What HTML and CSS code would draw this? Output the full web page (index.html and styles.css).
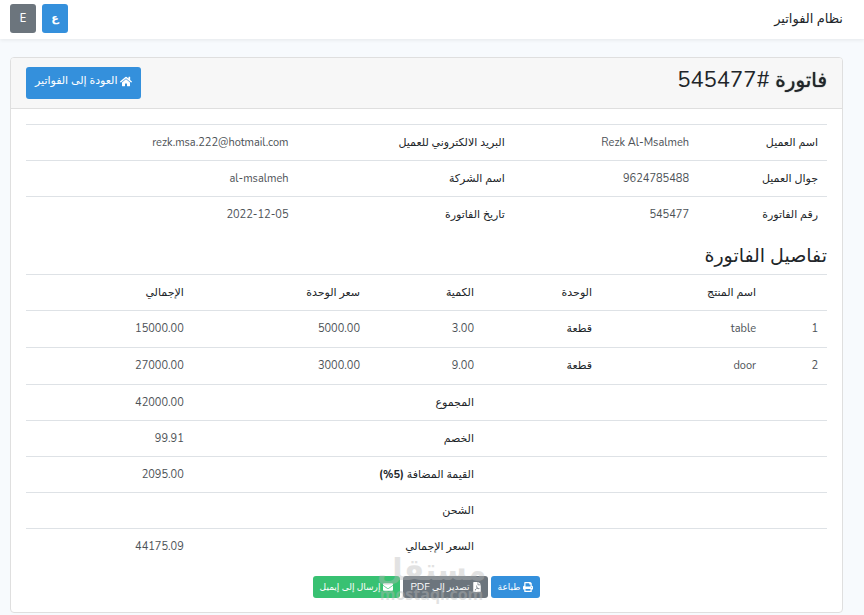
FILE: index.html
```html
<!DOCTYPE html>
<html lang="ar" dir="rtl">
<head>
<meta charset="utf-8">
<meta name="viewport" content="width=device-width, initial-scale=1">
<title>نظام الفواتير</title>
<link rel="stylesheet" href="styles.css">
</head>
<body>
<header class="navbar">
  <a class="brand" href="#">نظام الفواتير</a>
  <nav class="languages">
    <a class="btn btn-primary" href="#">ع</a>
    <a class="btn btn-secondary" href="#">E</a>
  </nav>
</header>
<main class="page">
  <section class="card">
    <div class="card-header">
      <h1><b>فاتورة</b> #545477</h1>
      <a class="btn btn-primary btn-back" href="#">
        <svg class="icon-home" viewBox="0 0 576 512" aria-hidden="true"><path d="M280 148 96 300v164a16 16 0 0 0 16 16h112a16 16 0 0 0 16-16v-96a16 16 0 0 1 16-16h64a16 16 0 0 1 16 16v96a16 16 0 0 0 16 16h112a16 16 0 0 0 16-16V300L296 148a12 12 0 0 0-16 0zM572 251l-84-69V44a12 12 0 0 0-12-12h-56a12 12 0 0 0-12 12v72l-89-74a48 48 0 0 0-61 0L4 251a12 12 0 0 0-2 17l26 31a12 12 0 0 0 17 2L280 107a12 12 0 0 1 16 0l235 194a12 12 0 0 0 17-2l26-31a12 12 0 0 0-2-17z"/></svg>
        العودة إلى الفواتير
      </a>
    </div>
    <div class="card-body">
      <table class="table customer">
        <colgroup><col class="c-label"><col class="c-value"><col class="c-label2"><col></colgroup>
        <tbody>
          <tr><th scope="row">اسم العميل</th><td>Rezk Al-Msalmeh</td><th scope="row">البريد الالكتروني للعميل</th><td>rezk.msa.222@hotmail.com</td></tr>
          <tr><th scope="row">جوال العميل</th><td>9624785488</td><th scope="row">اسم الشركة</th><td>al-msalmeh</td></tr>
          <tr><th scope="row">رقم الفاتورة</th><td>545477</td><th scope="row">تاريخ الفاتورة</th><td><bdi dir="ltr">2022-12-05</bdi></td></tr>
        </tbody>
      </table>
      <h2>تفاصيل الفاتورة</h2>
      <table class="table details">
        <colgroup><col class="c-index"><col class="c-product"><col class="c-unit"><col class="c-quantity"><col class="c-price"><col></colgroup>
        <thead>
          <tr><td></td><th scope="col">اسم المنتج</th><th scope="col">الوحدة</th><th scope="col">الكمية</th><th scope="col">سعر الوحدة</th><th scope="col">الإجمالي</th></tr>
        </thead>
        <tbody class="items">
          <tr><td>1</td><td>table</td><td class="unit">قطعة</td><td>3.00</td><td>5000.00</td><td>15000.00</td></tr>
          <tr><td>2</td><td>door</td><td class="unit">قطعة</td><td>9.00</td><td>3000.00</td><td>27000.00</td></tr>
        </tbody>
        <tfoot>
          <tr><td colspan="3"></td><th colspan="2" scope="row">المجموع</th><td>42000.00</td></tr>
          <tr><td colspan="3"></td><th colspan="2" scope="row">الخصم</th><td>99.91</td></tr>
          <tr><td colspan="3"></td><th colspan="2" scope="row">القيمة المضافة <b>(<bdi dir="ltr">%5</bdi>)</b></th><td>2095.00</td></tr>
          <tr><td colspan="3"></td><th colspan="2" scope="row">الشحن</th><td></td></tr>
          <tr><td colspan="3"></td><th colspan="2" scope="row">السعر الإجمالي</th><td>44175.09</td></tr>
        </tfoot>
      </table>
      <div class="actions">
        <a class="btn btn-sm btn-primary" href="#">
          <svg class="icon" viewBox="0 0 512 512" aria-hidden="true"><path fill-rule="evenodd" d="M448 192V77a32 32 0 0 0-9-22L393 9a32 32 0 0 0-22-9H96a32 32 0 0 0-32 32v160a64 64 0 0 0-64 64v112a16 16 0 0 0 16 16h48v96a32 32 0 0 0 32 32h320a32 32 0 0 0 32-32v-96h48a16 16 0 0 0 16-16V256a64 64 0 0 0-64-64zM384 448H128v-96h256zM384 224H128V64h192v48a16 16 0 0 0 16 16h48zM432 248a24 24 0 1 1 0 48 24 24 0 0 1 0-48z"/></svg>
          طباعة
        </a>
        <a class="btn btn-sm btn-secondary" href="#">
          <svg class="icon-file" viewBox="0 0 384 512" aria-hidden="true"><path fill-rule="evenodd" d="M224 136V0H24A24 24 0 0 0 0 24v464a24 24 0 0 0 24 24h336a24 24 0 0 0 24-24V160H248a24 24 0 0 1-24-24zM384 122v6H256V0h6a24 24 0 0 1 17 7l98 98a24 24 0 0 1 7 17zM158 180h38l2 80 50 66 62-2 10 36-46 6-48-24-70 20-44 72-36-14 12-34 46-32 36-74zm24 120-22 44 46-14z"/></svg>
          <span>تصدير إلى <span class="latin">PDF</span></span>
        </a>
        <a class="btn btn-sm btn-success" href="#">
          <svg class="icon" viewBox="0 0 512 512" aria-hidden="true"><path d="M502 191a6 6 0 0 1 10 5v204a48 48 0 0 1-48 48H48a48 48 0 0 1-48-48V196a6 6 0 0 1 10-5c22 17 52 39 155 114 21 15 57 48 91 47 34 1 71-32 91-47 103-75 133-97 155-114zM256 320c23 0 57-30 74-42 133-96 143-105 173-128a24 24 0 0 0 9-19v-19a48 48 0 0 0-48-48H48a48 48 0 0 0-48 48v19a24 24 0 0 0 9 19c31 23 40 32 173 128 17 12 51 42 74 42z"/></svg>
          إرسال إلى إيميل
        </a>
        <div class="watermark"><span class="mark-ar">مستقل</span><span class="mark-en" dir="ltr">mostaql.com</span></div>
      </div>
    </div>
  </section>
</main>
</body>
</html>
```
FILE: styles.css
```css
* { box-sizing: border-box; }

body {
  margin: 0;
  background: #f7fafd;
  color: #212529;
  font-family: Nunito, "DejaVu Sans", sans-serif;
  font-size: 11px;
  line-height: 18px;
}

a { color: inherit; text-decoration: none; }

.navbar {
  display: flex;
  align-items: center;
  justify-content: space-between;
  height: 39px;
  padding: 0 21px 2px 10px;
  background: #fff;
  box-shadow: 0 1px 4px rgba(0, 0, 0, 0.08);
}

.brand { font-size: 13px; }

.languages { display: flex; gap: 6px; }

.btn {
  display: inline-flex;
  align-items: center;
  justify-content: center;
  gap: 3px;
  padding: 5px 10px;
  border-radius: 3px;
  color: #fff;
  white-space: nowrap;
}

.languages .btn { height: 29px; width: 26px; padding: 5px 0; font-weight: 600; }
.btn-primary { background: #3490dc; }
.btn-secondary { background: #6c757d; }
.btn-success { background: #38c172; }

.btn svg { fill: currentColor; flex: none; }
.icon { width: 10px; height: 10px; }
.icon-file { width: 8px; height: 10px; }
.icon-home { width: 12px; height: 11px; }

.page { padding: 18px 21px 0 10px; }

.card {
  border: 1px solid #dfdfdf;
  border-radius: 4px;
  background: #fff;
}

.card-header {
  display: flex;
  align-items: flex-start;
  justify-content: space-between;
  height: 51px;
  padding: 9px 15px;
  border-bottom: 1px solid #dfdfdf;
  border-radius: 3px 3px 0 0;
  background: #f7f7f7;
}

.btn-back { height: 32px; padding: 4px 9px 8px; }

h1, h2 { margin: 0; font-weight: 400; }

h1 { font-size: 22px; line-height: 26px; }

h1 b {
  font-size: 20px;
  font-weight: 400;
  text-shadow: 0 0 1px #212529;
}

h2 { padding: 12px 0 6px; font-size: 19px; line-height: 24px; }

.card-body { padding: 15px 15px 14px; }

.table {
  width: 100%;
  table-layout: fixed;
  border-collapse: separate;
  border-spacing: 0;
}

.table th,
.table td {
  height: 36px;
  padding: 0 9px;
  border-top: 1px solid #dee2e6;
  font-weight: 400;
  text-align: right;
}

.table td { color: #4c5156; }
.table .unit { color: #212529; }
.table .items td { height: 37px; }

.c-label { width: 129px; }
.c-value { width: 23%; }
.c-label2 { width: 27%; }
.c-index { width: 62px; }
.c-product { width: 164px; }
.c-unit { width: 118px; }
.c-quantity { width: 114px; }
.c-price { width: 22%; }

.actions {
  position: relative;
  display: flex;
  justify-content: center;
  gap: 3px;
  padding-top: 12px;
}

.btn-sm { padding: 2px 7px; font-size: 9px; }
.latin { font-size: 10px; }

.watermark {
  position: absolute;
  top: -8px;
  left: calc(50% + 5px);
  display: flex;
  flex-direction: column;
  align-items: center;
  transform: translateX(-50%);
  color: #b9b9b9;
  font-weight: 700;
  opacity: 0.4;
  pointer-events: none;
}

.mark-ar { font-size: 30px; line-height: 30px; }
.mark-en { font-family: "Open Sans", sans-serif; font-size: 16px; line-height: 16px; }
```
